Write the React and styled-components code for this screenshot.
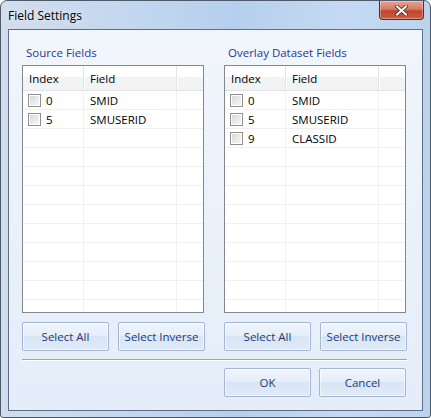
import React from 'react'
import styled, { createGlobalStyle } from 'styled-components'

const GlobalStyle = createGlobalStyle`
  html, body {
    margin: 0;
    padding: 0;
    background: #ffffff;
  }
  body {
    font-family: "Segoe UI", "Open Sans", "Noto Sans", sans-serif;
    font-size: 11.5px;
  }
`

const Window = styled.div`
  width: 431px;
  height: 418px;
  box-sizing: border-box;
  border: 1px solid #4d5a6a;
  border-radius: 7px 7px 3px 3px;
  background: linear-gradient(90deg, #d2dded 0%, #c3d7ef 30%, #b6cfee 55%, #c5daf2 80%, #bcd3ee 100%);
  display: flex;
  flex-direction: column;
  overflow: hidden;
`

const TitleBar = styled.div`
  height: 28px;
  display: flex;
  align-items: flex-start;
  justify-content: space-between;
  padding-left: 7px;
  padding-right: 6px;
`

const Title = styled.div`
  margin-top: 6px;
  color: #000;
  font-size: 12px;
  text-shadow: 0 0 6px rgba(255, 255, 255, 0.9);
`

const CloseButton = styled.div`
  width: 45px;
  height: 19px;
  box-sizing: border-box;
  border: 1px solid #5a2a22;
  border-top: none;
  border-radius: 0 0 4px 4px;
  background: linear-gradient(180deg, #e8a493 0%, #d47a64 45%, #c2452c 55%, #cf5a3e 100%);
  box-shadow: inset 0 0 0 1px rgba(255, 255, 255, 0.35);
  display: flex;
  align-items: center;
  justify-content: center;
`

const Client = styled.div`
  flex: 1;
  margin: 0 7px 6px 7px;
  border: 1px solid #5e6e84;
  background: linear-gradient(180deg, #f2f6fc 0%, #eaf1fa 50%, #e4edf9 100%);
  padding: 15px 15px 12px 13px;
  display: flex;
  flex-direction: column;
`

const Columns = styled.div`
  display: grid;
  grid-template-columns: 183px 183px;
  column-gap: 19px;
`

const Group = styled.div`
  display: flex;
  flex-direction: column;
`

const GroupLabel = styled.div`
  color: #1e3897;
  height: 20px;
  line-height: 16px;
  padding-left: 4px;
`

const ListBox = styled.div`
  width: 182px;
  height: 248px;
  box-sizing: border-box;
  border: 1px solid #828790;
  background: #fff;
  overflow: hidden;
`

const cols = '61px 93px 1fr'

const HeaderRow = styled.div`
  display: grid;
  grid-template-columns: ${cols};
  height: 24px;
  background: linear-gradient(180deg, #ffffff 0%, #ffffff 45%, #f3f4f6 46%, #f1f2f4 100%);
  border-bottom: 1px solid #e2e3e5;
`

const HeaderCell = styled.div`
  display: flex;
  align-items: center;
  padding-left: 6px;
  color: #000;
  border-right: 1px solid #e3e4e6;
  box-shadow: 1px 0 0 #ffffff;
  &:last-child {
    border-right: none;
    box-shadow: none;
  }
`

const Row = styled.div`
  display: grid;
  grid-template-columns: ${cols};
  height: 19px;
  box-sizing: border-box;
  border-bottom: 1px solid #f0f0f0;
`

const Cell = styled.div`
  display: flex;
  align-items: center;
  gap: 5px;
  padding-left: ${p => (p.$check ? '5px' : '6px')};
  color: #000;
  border-right: 1px solid #f0f0f0;
  &:last-child {
    border-right: none;
  }
`

const CheckBox = styled.span`
  width: 13px;
  height: 13px;
  box-sizing: border-box;
  border: 1px solid #8e8f8f;
  background: linear-gradient(135deg, #d4d5d7 0%, #ececec 60%, #f7f7f7 100%);
  box-shadow: inset 0 0 0 1px #ffffff;
  flex: none;
`

const ButtonRow = styled.div`
  display: grid;
  grid-template-columns: 87px 87px;
  justify-content: space-between;
  margin-top: 9px;
`

const Button = styled.button`
  height: 29px;
  width: 87px;
  box-sizing: border-box;
  border: 1px solid #a3b6d3;
  border-radius: 2px;
  background: linear-gradient(180deg, #eff4fb 0%, #e6eef9 45%, #d9e5f5 50%, #e0eaf7 100%);
  box-shadow: inset 0 0 0 1px rgba(255, 255, 255, 0.6);
  font-family: inherit;
  font-size: 11.5px;
  color: #1b3a78;
  padding: 0;
`

const Separator = styled.div`
  margin-top: 8px;
  width: 385px;
  height: 1px;
  background: #a0a4aa;
  box-shadow: 0 1px 0 #ffffff;
`

const Footer = styled.div`
  display: flex;
  justify-content: flex-end;
  gap: 8px;
  margin-top: 8px;
  padding-right: 1px;
`

function FieldList({ label, fields }) {
  const blanks = Array.from({ length: 12 - fields.length })
  return (
    <Group>
      <GroupLabel>{label}</GroupLabel>
      <ListBox>
        <HeaderRow>
          <HeaderCell>Index</HeaderCell>
          <HeaderCell>Field</HeaderCell>
          <HeaderCell />
        </HeaderRow>
        {fields.map(f => (
          <Row key={f.index}>
            <Cell $check>
              <CheckBox />
              {f.index}
            </Cell>
            <Cell>{f.name}</Cell>
            <Cell />
          </Row>
        ))}
        {blanks.map((_, i) => (
          <Row key={'b' + i}>
            <Cell />
            <Cell />
            <Cell />
          </Row>
        ))}
      </ListBox>
      <ButtonRow>
        <Button>Select All</Button>
        <Button>Select Inverse</Button>
      </ButtonRow>
    </Group>
  )
}

const sourceFields = [
  { index: 0, name: 'SMID' },
  { index: 5, name: 'SMUSERID' },
]

const overlayFields = [
  { index: 0, name: 'SMID' },
  { index: 5, name: 'SMUSERID' },
  { index: 9, name: 'CLASSID' },
]

export default function App() {
  return (
    <>
      <GlobalStyle />
      <Window>
        <TitleBar>
          <Title>Field Settings</Title>
          <CloseButton>
            <svg width="13" height="11" viewBox="0 0 13 11">
              <path d="M2 1.5 L11 9.5 M11 1.5 L2 9.5" stroke="#4a2a26" strokeWidth="3.6" strokeLinecap="square" />
              <path d="M2 1.5 L11 9.5 M11 1.5 L2 9.5" stroke="#ffffff" strokeWidth="2" strokeLinecap="square" />
            </svg>
          </CloseButton>
        </TitleBar>
        <Client>
          <Columns>
            <FieldList label="Source Fields" fields={sourceFields} />
            <FieldList label="Overlay Dataset Fields" fields={overlayFields} />
          </Columns>
          <Separator />
          <Footer>
            <Button>OK</Button>
            <Button>Cancel</Button>
          </Footer>
        </Client>
      </Window>
    </>
  )
}
